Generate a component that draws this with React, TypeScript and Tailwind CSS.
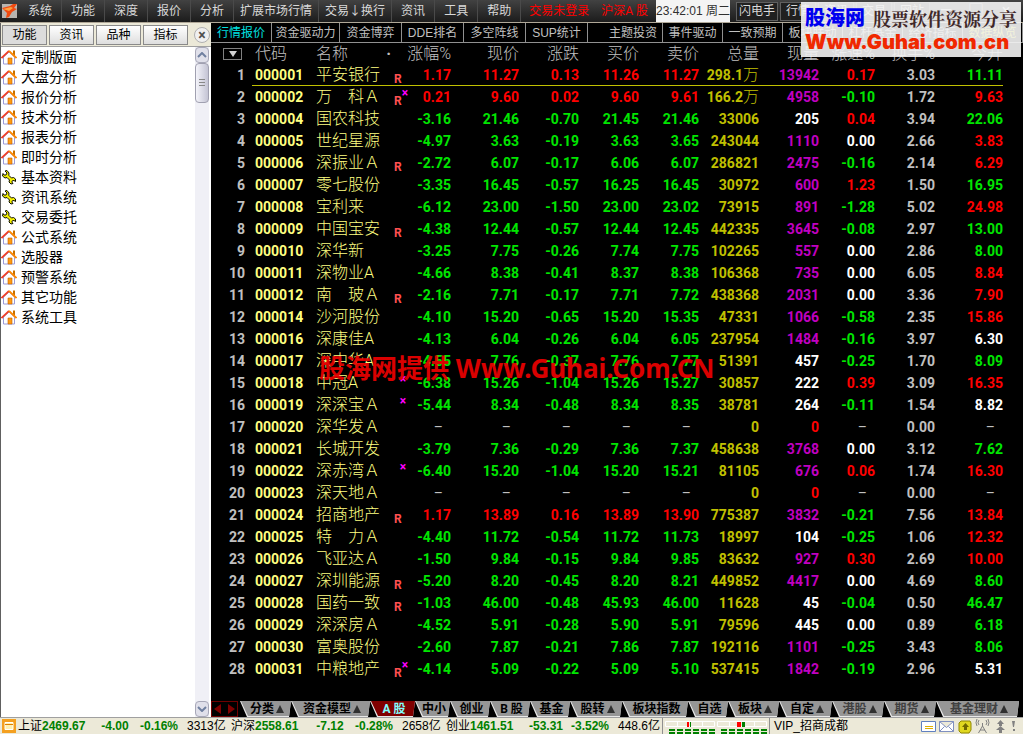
import React from 'react';

type Row = [
    code: string,
    name: string,
    mark: string,
    pct: string,
    last: string,
    chg: string,
    bid: string,
    ask: string,
    volume: string,
    lot: string,
    speed: string,
    turnover: string,
    open: string,
    openTone: 'r' | 'g' | 'w' | '-',
];

const rows: Row[] = [
    ['000001', '平安银行', 'R', '1.17', '11.27', '0.13', '11.26', '11.27', '298.1万', '13942', '0.17', '3.03', '11.11', 'g'],
    ['000002', '万　科Ａ', 'Rx', '0.21', '9.60', '0.02', '9.60', '9.61', '166.2万', '4958', '-0.10', '1.72', '9.63', 'r'],
    ['000004', '国农科技', '', '-3.16', '21.46', '-0.70', '21.45', '21.46', '33006', '205', '0.04', '3.94', '22.06', 'g'],
    ['000005', '世纪星源', '', '-4.97', '3.63', '-0.19', '3.63', '3.65', '243044', '1110', '0.00', '2.66', '3.83', 'r'],
    ['000006', '深振业Ａ', 'R', '-2.72', '6.07', '-0.17', '6.06', '6.07', '286821', '2475', '-0.16', '2.14', '6.29', 'r'],
    ['000007', '零七股份', '', '-3.35', '16.45', '-0.57', '16.25', '16.45', '30972', '600', '1.23', '1.50', '16.95', 'g'],
    ['000008', '宝利来', '', '-6.12', '23.00', '-1.50', '23.00', '23.02', '73915', '891', '-1.28', '5.02', '24.98', 'r'],
    ['000009', '中国宝安', 'R', '-4.38', '12.44', '-0.57', '12.44', '12.45', '442335', '3645', '-0.08', '2.97', '13.00', 'g'],
    ['000010', '深华新', '', '-3.25', '7.75', '-0.26', '7.74', '7.75', '102265', '557', '0.00', '2.86', '8.00', 'g'],
    ['000011', '深物业A', '', '-4.66', '8.38', '-0.41', '8.37', '8.38', '106368', '735', '0.00', '6.05', '8.84', 'r'],
    ['000012', '南　玻Ａ', 'R', '-2.16', '7.71', '-0.17', '7.71', '7.72', '438368', '2031', '0.00', '3.36', '7.90', 'r'],
    ['000014', '沙河股份', '', '-4.10', '15.20', '-0.65', '15.20', '15.35', '47331', '1066', '-0.58', '2.35', '15.86', 'r'],
    ['000016', '深康佳A', '', '-4.13', '6.04', '-0.26', '6.04', '6.05', '237954', '1484', '-0.16', '3.97', '6.30', 'w'],
    ['000017', '深中华A', '', '-4.55', '7.76', '-0.37', '7.76', '7.77', '51391', '457', '-0.25', '1.70', '8.09', 'g'],
    ['000018', '中冠A', 'x', '-6.38', '15.26', '-1.04', '15.26', '15.27', '30857', '222', '0.39', '3.09', '16.35', 'r'],
    ['000019', '深深宝Ａ', 'x', '-5.44', '8.34', '-0.48', '8.34', '8.35', '38781', '264', '-0.11', '1.54', '8.82', 'w'],
    ['000020', '深华发Ａ', '', '–', '–', '–', '–', '–', '0', '0', '–', '0.00', '–', '-'],
    ['000021', '长城开发', '', '-3.79', '7.36', '-0.29', '7.36', '7.37', '458638', '3768', '0.00', '3.12', '7.62', 'g'],
    ['000022', '深赤湾Ａ', 'x', '-6.40', '15.20', '-1.04', '15.20', '15.21', '81105', '676', '0.06', '1.74', '16.30', 'r'],
    ['000023', '深天地Ａ', '', '–', '–', '–', '–', '–', '0', '0', '–', '0.00', '–', '-'],
    ['000024', '招商地产', 'R', '1.17', '13.89', '0.16', '13.89', '13.90', '775387', '3832', '-0.21', '7.56', '13.84', 'r'],
    ['000025', '特　力Ａ', '', '-4.40', '11.72', '-0.54', '11.72', '11.73', '18997', '104', '-0.25', '1.06', '12.32', 'r'],
    ['000026', '飞亚达Ａ', '', '-1.50', '9.84', '-0.15', '9.84', '9.85', '83632', '927', '0.30', '2.69', '10.00', 'r'],
    ['000027', '深圳能源', 'R', '-5.20', '8.20', '-0.45', '8.20', '8.21', '449852', '4417', '0.00', '4.69', '8.60', 'g'],
    ['000028', '国药一致', 'R', '-1.03', '46.00', '-0.48', '45.93', '46.00', '11628', '45', '-0.04', '0.50', '46.47', 'g'],
    ['000029', '深深房Ａ', '', '-4.52', '5.91', '-0.28', '5.90', '5.91', '79596', '445', '0.00', '0.89', '6.18', 'g'],
    ['000030', '富奥股份', '', '-2.60', '7.87', '-0.21', '7.86', '7.87', '192116', '1101', '-0.25', '3.43', '8.06', 'g'],
    ['000031', '中粮地产', 'Rx', '-4.14', '5.09', '-0.22', '5.09', '5.10', '537415', '1842', '-0.19', '2.96', '5.31', 'w'],
];

const tones = {
    r: 'text-[#ff0000]',
    g: 'text-[#00e600]',
    w: 'text-white',
    '-': 'text-[#c0c0c0]',
};

const signTone = (v: string) => {
    if (v === '–') return tones['-'];
    if (v.startsWith('-')) return tones.g;
    return Number(v) === 0 ? tones.w : tones.r;
};

const lotTone = (v: string) => {
    const n = Number(v);
    if (n === 0) return tones.r;
    return n >= 500 ? 'text-[#c000c0]' : tones.w;
};

const menus = ['系统', '功能', '深度', '报价', '分析', '扩展市场行情', '交易↓换行', '资讯', '工具', '帮助'];

const topTabs = [
    { label: '行情报价', cls: 'w-[61px] text-[#00e0e0]' },
    { label: '资金驱动力', cls: 'w-[68px]' },
    { label: '资金博弈', cls: 'w-[62px]' },
    { label: 'DDE排名', cls: 'w-[62px]' },
    { label: '多空阵线', cls: 'w-[62px]' },
    { label: 'SUP统计', cls: 'w-[62px]' },
    { label: '主题投资', cls: 'w-[75px] pl-4' },
    { label: '事件驱动', cls: 'w-[60px]' },
    { label: '一致预期', cls: 'w-[60px]' },
    { label: '板块联动', cls: 'w-[60px]' },
    { label: '杠杆基金', cls: 'w-[60px]' },
    { label: '经济指标', cls: 'w-[60px]' },
    { label: '数据纵览', cls: 'w-[60px] text-[#e0e000]' },
];

const bottomTabs = [
    { label: '分类', arrow: true, cls: 'w-[51px]' },
    { label: '资金模型', arrow: true, cls: 'w-[79px]' },
    { label: 'A 股', active: true, cls: 'w-[45px]' },
    { label: '中小', cls: 'w-[35px]' },
    { label: '创业', cls: 'w-[40px]' },
    { label: 'B 股', cls: 'w-[40px]' },
    { label: '基金', cls: 'w-[40px]' },
    { label: '股转', arrow: true, cls: 'w-[52px]' },
    { label: '板块指数', cls: 'w-[66px]' },
    { label: '自选', cls: 'w-[40px]' },
    { label: '板块', arrow: true, cls: 'w-[51px]' },
    { label: '自定', arrow: true, cls: 'w-[53px]' },
    { label: '港股', arrow: true, dim: true, cls: 'w-[52px]' },
    { label: '期货', arrow: true, dim: true, cls: 'w-[52px]' },
    { label: '基金理财', arrow: true, dim: true, cls: 'w-[83px]' },
];

const treeItems = [
    '定制版面', '大盘分析', '报价分析', '技术分析', '报表分析', '即时分析', '基本资料',
    '资讯系统', '交易委托', '公式系统', '选股器', '预警系统', '其它功能', '系统工具',
];
const wrenchItems = ['基本资料', '资讯系统', '交易委托'];

const HouseIcon = () => (
    <svg viewBox="0 0 16 16" className="h-4 w-4 shrink-0" aria-hidden="true">
        <path d="M12 1.500h2v6h-2z" fill="#c87000" />
        <path d="M2.500 8 8 3 13.500 8v7h-11z" fill="#fff" stroke="#9a9ad8" />
        <path d="M0.500 9 8 1.800" stroke="#f04028" strokeWidth="1.800" fill="none" />
        <path d="M8 1.800 15.500 9" stroke="#ff8a00" strokeWidth="1.800" fill="none" />
        <path d="M7 9h4v6H7z" fill="#ff9a10" stroke="#c06000" strokeWidth="0.6" />
    </svg>
);

const WrenchIcon = () => (
    <svg viewBox="0 0 16 16" className="h-4 w-4 shrink-0" aria-hidden="true">
        <path
            d="M4 2 6 4 5 6 3 6 2 4.5 1.5 7 4 9 6 8.5 8.5 11 8 13 10 15 12 14.5 10.8 13 11.5 11.6 13 11.5 14.5 12.5 14.5 10 12.5 8.5 10.5 9 7.8 6.3 8 4 6 1.5z"
            fill="#f4f000"
            stroke="#101000"
            strokeWidth="1"
        />
    </svg>
);

const Meter = ({ red, green }: { red: string; green: string }) => (
    <svg viewBox="0 0 50 16" className="h-4 w-[50px] shrink-0" aria-hidden="true">
        <path d="M0.5 3.5h49v5h-49zM12.5 3.5v5M25.5 3.5v5M37.5 3.5v5" fill="none" stroke="#fff" />
        <path d={red} fill="#ff0000" />
        <path d={green} fill="#008000" />
        <path d="M4 12h46M4 15h46" stroke="#008000" strokeWidth="2" strokeDasharray="6 2" />
    </svg>
);

const MenuBar = () => (
    <header className="flex h-[22px] shrink-0 items-center bg-gradient-to-b from-[#424242] to-[#1c1c1c] pl-0.5 text-xs text-[#d8d8d8]">
        <svg viewBox="0 0 16 16" className="mr-px h-4 w-4 shrink-0" aria-hidden="true">
            <path d="M0 1h15v14H0z" fill="#b8b4b0" />
            <path d="M0 5 8 3l3-2 4 0-3 4 3 1-5 3-3 5-3 1 1-5z" fill="#f04a10" />
            <path d="M1 6 9 4l2 1-4 3z" fill="#ffa040" />
        </svg>
        <nav className="flex h-full">
            {menus.map((m) => (
                <button
                    key={m}
                    className={`h-full shrink-0 border-r border-[#4a4a4a] whitespace-nowrap ${m.length > 2 ? 'px-1.5' : 'px-[9px]'}`}
                >
                    {m}
                </button>
            ))}
        </nav>
        <a href="#login" className="ml-2 whitespace-nowrap text-[#ff0000]">交易未登录</a>
        <a href="#market" className="ml-3 whitespace-nowrap text-[#ff0000]">沪深A 股</a>
        <div className="ml-auto flex h-full items-center">
            <time className="mr-1.5 flex h-full w-[74px] items-center justify-center bg-[#f4f4f4] font-['Liberation_Sans','Noto_Sans_CJK_SC',sans-serif] whitespace-nowrap text-[#303030]">
                23:42:01 周二
            </time>
            <div className="flex w-[287px] gap-0.5">
                <button className="h-[19px] w-[42px] border border-[#606060] bg-[#202020] whitespace-nowrap">闪电手</button>
                {['行情', '资讯', '交易', '网站'].map((b) => (
                    <button key={b} className="h-[19px] w-9 border border-[#606060] bg-[#202020]">{b}</button>
                ))}
                {['—', '□', '×'].map((b) => (
                    <button key={b} className="h-[19px] w-7 text-base leading-4">{b}</button>
                ))}
            </div>
        </div>
    </header>
);

const Sidebar = () => (
    <aside className="flex w-[211px] shrink-0 flex-col border-l border-[#606060] bg-[#ece9d8]">
        <div className="flex h-6 shrink-0 items-center gap-0.5 border-b border-[#a0a0a0] pl-px text-xs text-black">
            {['功能', '资讯', '品种', '指标'].map((b, i) => (
                <button
                    key={b}
                    className={`h-5 w-[45px] border border-[#8a8a8a] ${i === 0 ? 'bg-[#dcdcdc]' : 'bg-gradient-to-b from-white to-[#dedede]'}`}
                >
                    {b}
                </button>
            ))}
            <button
                aria-label="关闭"
                className="ml-1 flex h-4 w-4 items-center justify-center rounded-full border border-[#b0b0b0] bg-[#f0f0f0] text-sm leading-none font-bold text-[#505050]"
            >
                ×
            </button>
        </div>
        <div className="flex min-h-0 flex-1 bg-white">
            <ul className="flex-1 text-sm leading-5 text-black">
                {treeItems.map((t) => (
                    <li key={t}>
                        <a href="#tree" className="flex h-5 items-center gap-1">
                            {wrenchItems.includes(t) ? <WrenchIcon /> : <HouseIcon />}
                            {t}
                        </a>
                    </li>
                ))}
            </ul>
            <div className="mr-0.5 flex w-[14px] flex-col bg-[#f0f0f6]">
                <button aria-label="向上" className="flex h-4 items-center justify-center rounded-sm border border-[#a8a8b8] bg-[#e0e0ea]">
                    <svg viewBox="0 0 10 6" className="h-1.5 w-2.5"><path d="M1 5 5 1l4 4" fill="none" stroke="#7080a0" strokeWidth="2" /></svg>
                </button>
                <div className="flex h-10 items-center justify-center rounded-sm border border-[#a0a0b0] bg-gradient-to-r from-[#f4f4fa] to-[#c4c4d4]">
                    <svg viewBox="0 0 6 8" className="h-2 w-1.5"><path d="M0 .5h6M0 3.5h6M0 6.5h6" stroke="#888" /></svg>
                </div>
                <button aria-label="向下" className="mt-auto flex h-4 items-center justify-center rounded-sm border border-[#a8a8b8] bg-[#e0e0ea]">
                    <svg viewBox="0 0 10 6" className="h-1.5 w-2.5"><path d="m1 1 4 4 4-4" fill="none" stroke="#7080a0" strokeWidth="2" /></svg>
                </button>
            </div>
        </div>
    </aside>
);

const QuoteTable = () => (
    <table className="w-full table-fixed border-collapse">
        <colgroup>
            <col className="w-[41px]" />
            <col className="w-[54px]" />
            <col className="w-[86px]" />
            <col className="w-[14px]" />
            <col className="w-[45px]" />
            <col className="w-[68px]" />
            <col className="w-[60px]" />
            <col className="w-[60px]" />
            <col className="w-[60px]" />
            <col className="w-[60px]" />
            <col className="w-[60px]" />
            <col className="w-[56px]" />
            <col className="w-[60px]" />
            <col className="w-[68px]" />
            <col />
        </colgroup>
        <thead>
            <tr className="h-[21px] text-right text-base leading-[21px] font-light whitespace-nowrap text-[#c0c0c0] [&>th]:p-0 [&>th]:font-light">
                <th>
                    <button aria-label="列选项" className="mr-2.5 flex h-3 w-[19px] items-center justify-center justify-self-end border border-[#808080]">
                        <svg viewBox="0 0 8 6" className="h-1.5 w-2"><path d="M0 0h8L4 6z" fill="#d0d0d0" /></svg>
                    </button>
                </th>
                <th className="text-left"><span className="pl-[3px]">代码</span></th>
                <th>
                    <div className="flex justify-between pr-px pl-2.5">
                        <span>名称</span>
                        <span className="font-bold">·</span>
                    </div>
                </th>
                <th />
                {['涨幅%', '现价', '涨跌', '买价', '卖价', '总量', '现量', '涨速%', '换手%', '今开'].map((h) => (
                    <th key={h}><span className="float-right">{h}</span></th>
                ))}
                <th />
            </tr>
        </thead>
        <tbody className="text-right text-sm leading-[22px] font-bold">
            {rows.map(([code, name, mark, pct, last, chg, bid, ask, volume, lot, speed, turnover, open, openTone], i) => {
                const tone = signTone(pct);
                const dash = pct === '–' ? 'pr-2 font-normal' : '';
                return (
                    <tr
                        key={code}
                        className={`h-[22px] whitespace-nowrap [&>td]:py-0 [&>td]:pl-0 ${i === 0 ? '[&>td:not(:first-child):not(:last-child)]:shadow-[inset_0_-1px_0_#c0c000]' : ''}`}
                    >
                        <td className="pr-[7px] text-[#c0c0c0]">{i + 1}</td>
                        <td className="text-left text-[#ffff80]"><span className="pl-[3px]">{code}</span></td>
                        <td className="text-left text-base leading-[22px] font-light text-[#ffff80]"><span className="pl-2.5">{name}</span></td>
                        <td className="text-left text-xs text-[#ff5050]">
                            <div className="flex h-[22px] items-end pl-0.5 leading-[14px]">
                                <span className="w-2">{mark.includes('R') ? 'R' : ''}</span>
                                {mark.includes('x') && <span className="self-start text-[#ff00ff]">×</span>}
                            </div>
                        </td>
                        <td className={`${tone} ${dash}`}>{pct}</td>
                        <td className={`${tone} ${dash}`}>{last}</td>
                        <td className={`${tone} ${dash}`}>{chg}</td>
                        <td className={`${tone} ${dash}`}>{bid}</td>
                        <td className={`${tone} ${dash}`}>{ask}</td>
                        <td className="text-[#c0c000]">
                            {volume.replace('万', '')}
                            {volume.includes('万') && <span className="text-base leading-[21px] font-light">万</span>}
                        </td>
                        <td className={lotTone(lot)}>{lot}</td>
                        <td className={`${signTone(speed)} ${dash}`}>{speed}</td>
                        <td className="text-[#c0c0c0]">{turnover}</td>
                        <td className={`${tones[openTone]} ${dash}`}>{open}</td>
                        <td />
                    </tr>
                );
            })}
        </tbody>
    </table>
);

const BottomTabs = () => (
    <div className="mt-auto flex h-4 shrink-0 overflow-hidden text-xs leading-4 font-bold">
        <div className="mr-0.5 flex w-[27px] border border-[#700000]">
            <button aria-label="上一页" className="flex flex-1 items-center justify-center">
                <svg viewBox="0 0 8 10" className="h-2.5 w-2"><path d="M7 0v10L0 5z" fill="#800000" /></svg>
            </button>
            <button aria-label="下一页" className="flex flex-1 items-center justify-center">
                <svg viewBox="0 0 8 10" className="h-2.5 w-2"><path d="M1 0v10l7-5z" fill="#800000" /></svg>
            </button>
        </div>
        {bottomTabs.map((t) => (
            <button
                key={t.label}
                className={`flex h-4 shrink-0 bg-[#e8e8e8] whitespace-nowrap [clip-path:polygon(0_0,100%_0,calc(100%-2px)_100%,7px_100%)] ${t.cls}`}
            >
                <span
                    className={`ml-px flex h-[15px] flex-1 items-center justify-center gap-0.5 pl-0.5 [clip-path:polygon(0_0,100%_0,100%_100%,7px_100%)] ${
                        t.active ? 'bg-[#800000] text-[#80ffff]' : t.dim ? 'bg-[#969696] text-[#404040]' : 'bg-[#969696] text-black'
                    }`}
                >
                    {t.label}
                    {t.arrow && (
                        <svg viewBox="0 0 8 8" className="h-2 w-2 shrink-0"><path d="M4 0 8 8H0z" fill="#303030" /></svg>
                    )}
                </span>
            </button>
        ))}
    </div>
);

const Index = ({ name, value, chg, pct, amount, cls }: { name: string; value: string; chg: string; pct: string; amount: string; cls: string }) => (
    <div className={`flex shrink-0 items-center whitespace-nowrap ${cls}`}>
        <span>{name}</span>
        <b className="flex-1 text-[#008000]">{value}</b>
        <b className="mr-px w-12 text-center text-[#008000]">{chg}</b>
        <b className="w-[47px] text-[#008000]">{pct}</b>
        <span className="w-11">{amount}</span>
    </div>
);

const StatusBar = () => (
    <footer className="flex h-[17px] shrink-0 items-center border-t border-[#a0a0a0] bg-[#ece9d8] pl-0.5 font-['Liberation_Sans','Noto_Sans_CJK_SC',sans-serif] text-xs leading-4 text-black">
        <svg viewBox="0 0 14 14" className="mr-0.5 h-3.5 w-3.5 shrink-0" aria-hidden="true">
            <path d="M0 0h14v14H0z" fill="#f4a020" />
            <path d="M3 3.5h8v7H3z" fill="#fff0b0" stroke="#fff" />
            <path d="M3 5.5h8" stroke="#e08000" />
        </svg>
        <Index name="上证" value="2469.67" chg="-4.00" pct="-0.16%" amount="3313亿" cls="w-[213px]" />
        <Index name="沪深" value="2558.61" chg="-7.12" pct="-0.28%" amount="2658亿" cls="w-[215px]" />
        <Index name="创业" value="1461.51" chg="-53.31" pct="-3.52%" amount="448.6亿" cls="w-[216px]" />
        <div className="flex h-full gap-0.5 border-x border-[#909090] px-0.5">
            <Meter red="M22 4h2v5h-2z" green="M25 4h1v5h-1z" />
            <Meter red="M20 4h4v5h-4z" green="M25 4h3v5h-3z" />
        </div>
        <span className="ml-1 whitespace-nowrap">VIP_招商成都</span>
        <svg viewBox="0 0 98 16" className="mr-1 ml-auto h-4 w-[98px] shrink-0" aria-hidden="true">
            <path d="M.5 3.5h14v10H.5z" fill="#fff" stroke="#6080c0" />
            <path d="M4 8.5h8M4 10.5h8" stroke="#e0b000" />
            <path d="M18.500 3.500h14v10h-14zM18.500 3.500l7 6 7-6M18.500 13.500l5-5M32.500 13.500l-5-5" fill="#fff" stroke="#8090c0" />
            <path d="M40 3h9l1 2v7l-2 3h-8l-2-2V5z" fill="#e0d820" stroke="#908800" />
            <path d="M44.500 5 41 9h2v3h3V9h2z" fill="#706800" />
            <path d="M61.500 5v3M61.500 8l-4 7M61.500 8l4 7M59 12h5M58 2q-2 3 0 5M65 2q2 3 0 5M56 1q-2 4 0 7M67 1q2 4 0 7" fill="none" stroke="#808080" />
            <path d="M79.500 2 76 6h2v2h3V6h2zM79.500 8 75 12h3v3h3v-3h3z" fill="#808080" />
            <path d="M91 3h3l-1 6h-1zM92 11h2v2h-2z" fill="#808080" />
        </svg>
    </footer>
);

const App: React.FC = () => {
    return (
        <div className="relative flex min-h-screen flex-col overflow-hidden bg-black font-['Roboto','Noto_Sans_CJK_SC',sans-serif]">
            <MenuBar />
            <div className="flex min-h-0 flex-1 border-t border-[#b0a898]">
                <Sidebar />
                <main className="relative flex min-w-0 flex-1 flex-col">
                    <nav className="flex h-5 shrink-0 overflow-hidden border-b border-[#909090] font-['Liberation_Sans','Noto_Sans_CJK_SC',sans-serif] text-xs text-[#c0c0c0]">
                        {topTabs.map((t) => (
                            <button key={t.label} className={`shrink-0 border-r border-[#909090] whitespace-nowrap ${t.cls}`}>
                                {t.label}
                            </button>
                        ))}
                    </nav>
                    <QuoteTable />
                    <BottomTabs />
                    <div className="pointer-events-none absolute top-[325px] left-[108px] font-['Noto_Sans','Noto_Sans_CJK_SC',sans-serif] text-[26px] leading-10 font-bold whitespace-nowrap text-[#e60000]/95">
                        股海网提供 Www.Guhai.Com.CN
                    </div>
                </main>
            </div>
            <StatusBar />
            <div className="absolute top-0.5 right-0.5 h-[55px] w-[220px] bg-[#f4f4f4]/90 px-1 whitespace-nowrap">
                <div className="flex h-8 items-center justify-between">
                    <strong className="text-xl leading-8 font-black text-[#0000f0]">股海网</strong>
                    <span className="font-['Noto_Serif_CJK_SC','Noto_Sans_CJK_SC',serif] text-lg leading-8 font-bold text-[#402828]">股票软件资源分享</span>
                </div>
                <a href="#guhai" className="block font-['Inter',sans-serif] text-xl leading-4 font-black text-[#f02800]">
                    Www.Guhai.com.cn
                </a>
            </div>
        </div>
    );
};

export default App;
